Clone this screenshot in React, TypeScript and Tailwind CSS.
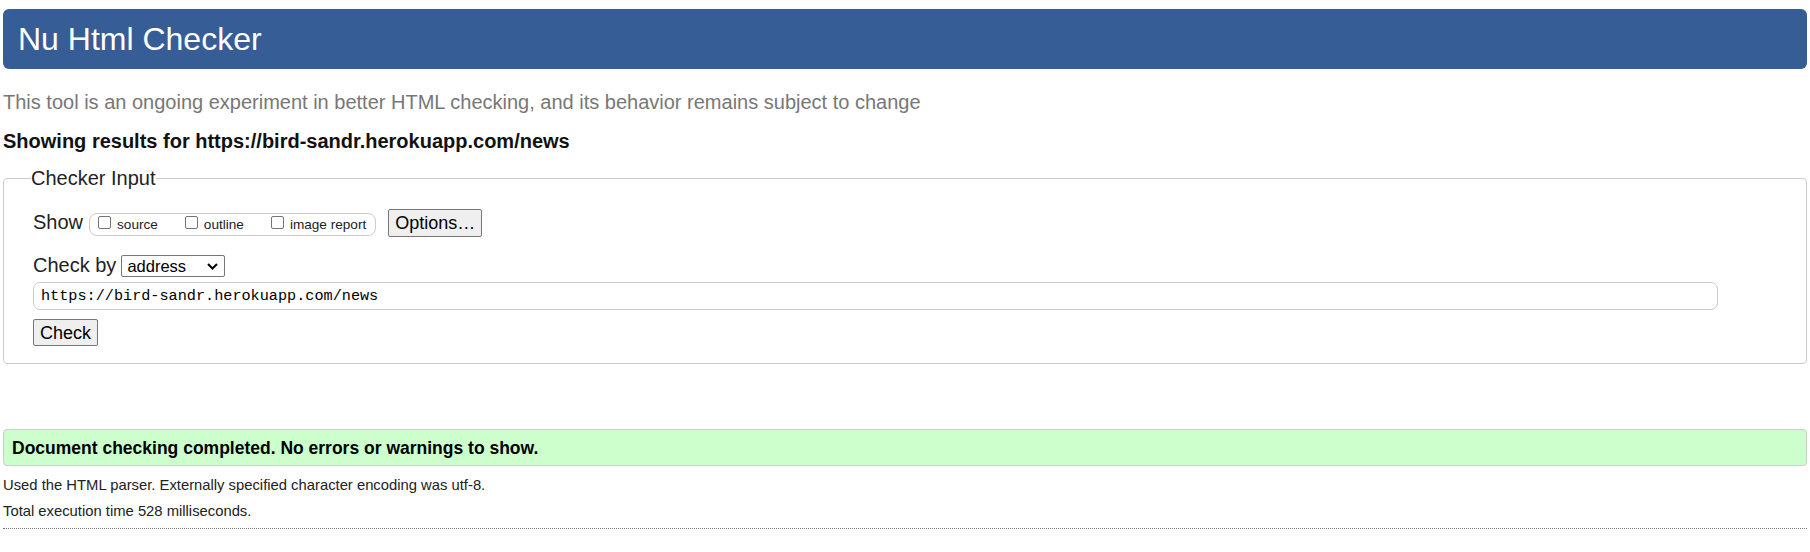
/**
 * Nu Html Checker results page
 */

function Checkbox() {
  return <span className="inline-block w-[13px] h-[13px] border border-[#767676] rounded-[2px] bg-white shrink-0" />;
}

function CheckOption({ label }: { label: string }) {
  return (
    <span className="flex items-baseline gap-[6px]">
      <Checkbox />
      <span>{label}</span>
    </span>
  );
}

export default function App() {
  return (
    <div className="min-h-[552px] bg-white px-[3px] font-['Liberation_Sans',Arial,sans-serif] text-[#222]">
      {/* Header */}
      <div className="mt-[9px] h-[60px] rounded-[6px] bg-[#365d96] flex items-center pl-[15px]">
        <h1 className="text-[32px] text-white">Nu Html Checker</h1>
      </div>

      <p className="mt-[21px] text-[20px] leading-[24px] text-[#777]">
        This tool is an ongoing experiment in better HTML checking, and its behavior remains subject to change
      </p>
      <p className="mt-[15px] text-[20px] leading-[24px] font-bold text-[#111]">
        Showing results for https://bird-sandr.herokuapp.com/news
      </p>

      {/* Checker Input */}
      <fieldset className="mt-[13px] border border-[#ccc] rounded-[4px] pl-[29px] pr-[20px] pb-[17px]">
        <legend className="-ml-[2px] px-0 text-[20px] leading-[24px]">Checker Input</legend>

        <div className="mt-[19px] flex items-baseline">
          <span className="text-[20px] leading-[24px]">Show</span>
          <span className="ml-[6px] flex items-baseline h-[23px] border border-[#ccc] rounded-[8px] pl-[8px] pr-[9px] text-[13.6px] leading-[21px] gap-[27px]">
            <CheckOption label="source" />
            <CheckOption label="outline" />
            <CheckOption label="image report" />
          </span>
          <button className="ml-[12px] h-[28px] px-[6px] border border-[#767676] rounded-[2px] bg-[#efefef] text-[18px] text-black">
            Options…
          </button>
        </div>

        <div className="mt-[16px] flex items-baseline gap-[5px]">
          <span className="text-[20px] leading-[24px]">Check by</span>
          <div className="w-[104px] h-[22px] border border-[#767676] rounded-[2px] flex items-center justify-between pl-[5px] pr-[6px] text-[16.5px] text-black">
            <span>address</span>
            <svg width="11" height="7" viewBox="0 0 11 7" fill="none">
              <polyline points="1,1 5.5,5.5 10,1" stroke="#000" strokeWidth="2" />
            </svg>
          </div>
        </div>

        <div className="mt-[5px] w-[1685px] h-[28px] border border-[#ccc] rounded-[7px] flex items-center pl-[7px] font-['Liberation_Mono',monospace] text-[15.2px] text-black">
          https://bird-sandr.herokuapp.com/news
        </div>

        <button className="mt-[9px] h-[27px] px-[6px] border border-[#767676] rounded-[2px] bg-[#efefef] text-[18px] text-black">
          Check
        </button>
      </fieldset>

      {/* Result */}
      <div className="mt-[65px] h-[37px] border border-[#ccc] rounded-[4px] bg-[#ccffcc] flex items-center pl-[8px]">
        <span className="text-[17.5px] font-bold text-black">Document checking completed. No errors or warnings to show.</span>
      </div>

      <div className="mt-[6px] text-[14.8px] leading-[26px]">
        <p>Used the HTML parser. Externally specified character encoding was utf-8.</p>
        <p>Total execution time 528 milliseconds.</p>
      </div>
      <div className="mt-[4px] border-t border-dotted border-[#777]" />
    </div>
  );
}
